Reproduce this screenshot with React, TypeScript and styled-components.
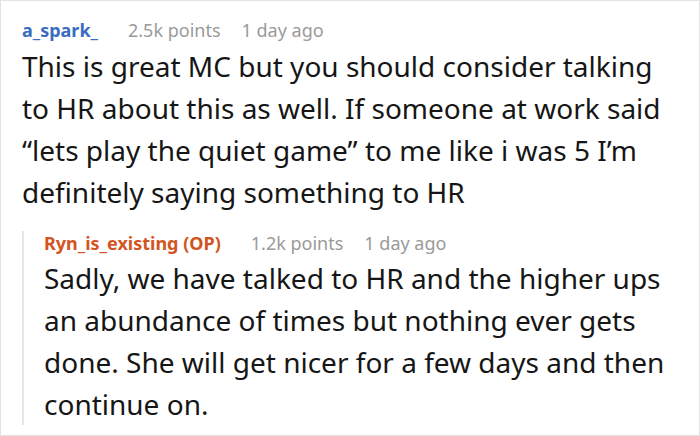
import styled, { createGlobalStyle } from "styled-components";

const GlobalStyle = createGlobalStyle`
    html, body {
        margin: 0;
        padding: 0;
        background: #ffffff;
    }
    body {
        font-family: "Noto Sans", "Open Sans", sans-serif;
    }
`;

interface IComment {
    author: string;
    op?: boolean;
    points: string;
    time: string;
    body: string;
}

const comment: IComment = {
    author: "a_spark_",
    points: "2.5k points",
    time: "1 day ago",
    body: "This is great MC but you should consider talking to HR about this as well. If someone at work said \u201Clets play the quiet game\u201D to me like i was 5 I\u2019m definitely saying something to HR",
};

const reply: IComment = {
    author: "Ryn_is_existing (OP)",
    op: true,
    points: "1.2k points",
    time: "1 day ago",
    body: "Sadly, we have talked to HR and the higher ups an abundance of times but nothing ever gets done. She will get nicer for a few days and then continue on.",
};

const CommentBlock = ({ data }: { data: IComment }) => {
    return <>
        <Meta>
            <Author op={data.op}>{data.author}</Author>
            <Info>{data.points}</Info>
            <Info>{data.time}</Info>
        </Meta>
        <Body>{data.body}</Body>
    </>
};

const App = () => {
    return <Frame>
        <GlobalStyle />
        <Thread>
            <CommentBlock data={comment} />
            <Reply>
                <CommentBlock data={reply} />
            </Reply>
        </Thread>
    </Frame>
};

const Frame = styled.div`
    width: 700px;
    height: 436px;
    box-sizing: border-box;
    border: 1px solid #e3e3e3;
    overflow: hidden;
    background: #ffffff;
`;
const Thread = styled.div`
    display: flex;
    flex-direction: column;
    padding: 17px 14px 0 21px;
`;
const Meta = styled.div`
    display: flex;
    align-items: baseline;
    gap: 21px;
    font-size: 18px;
    line-height: 24px;
`;
const Author = styled.span<{ op?: boolean }>`
    font-weight: 700;
    color: ${(p) => (p.op ? "#d4541f" : "#3a6cc0")};
    margin-right: 9px;
`;
const Info = styled.span`
    color: #9a9a9a;
`;
const Body = styled.div`
    font-size: 28px;
    line-height: 42px;
    color: #161616;
    margin-top: 3px;
`;
const Reply = styled.div`
    display: flex;
    flex-direction: column;
    margin-top: 18px;
    padding-left: 20px;
    border-left: 2px solid #e6e6e6;
    ${Body} {
        margin-top: 2px;
    }
`;

export default App;
